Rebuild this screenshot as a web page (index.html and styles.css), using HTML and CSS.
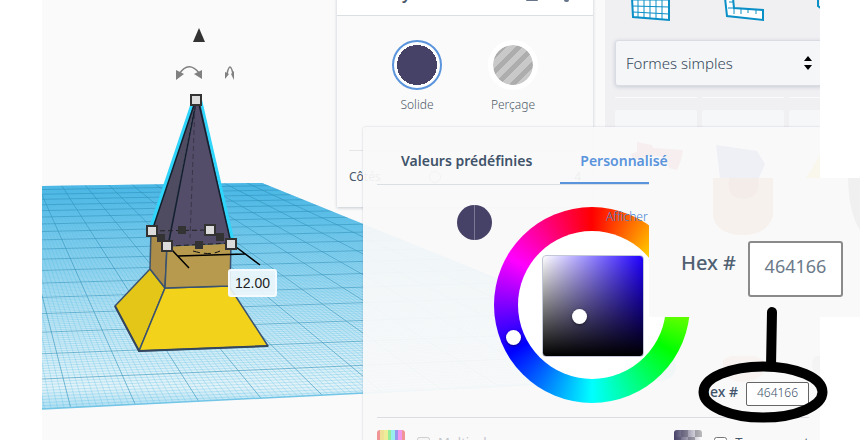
FILE: index.html
```
<!DOCTYPE html>
<html lang="fr">
<head>
    <meta charset="UTF-8">
    <meta name="viewport" content="width=device-width, initial-scale=1.0">
    <title>Éditeur 3D</title>
    <link rel="stylesheet" href="styles.css">
</head>
<body>
    <div class="app">
        <main class="viewport">
            <svg class="scene" viewBox="0 0 563 440" preserveAspectRatio="xMinYMin slice">
                <defs>
                    <linearGradient id="water" x1="0" y1="0" x2="0" y2="1">
                        <stop offset="0" stop-color="#4fb6e6"/>
                        <stop offset="0.25" stop-color="#8bd0ed"/>
                        <stop offset="0.55" stop-color="#bde4f3"/>
                        <stop offset="0.9" stop-color="#e4f3f8"/>
                        <stop offset="1" stop-color="#a8dcf1"/>
                    </linearGradient>
                    <clipPath id="plane-clip">
                        <path d="M0 186 L220 183 L563 322 L563 381 L0 409Z"/>
                    </clipPath>
                </defs>

                <g clip-path="url(#plane-clip)">
                    <rect x="0" y="182" width="563" height="228" fill="url(#water)"/>
                    <path id="minor" class="minor"/>
                    <path id="major" class="major"/>
                </g>
                <path d="M0 409 L563 381" stroke="#72c5e6" stroke-width="1.5"/>

                <!-- base -->
                <g stroke="#3a5270" stroke-width="1.5" stroke-linejoin="round">
                    <path d="M108 269 L123 288 L97 351 L73 306Z" fill="#e4c618"/>
                    <path d="M123 288 L187 286 L226 346 L97 351Z" fill="#f2d21b"/>
                    <path d="M109 231 L108 269 L123 288 L125 246Z" fill="#ab8c48"/>
                    <path d="M125 246 L123 288 L188 286 L189 243Z" fill="#b89a4e"/>
                </g>
                <path d="M73 306 L97 351 L226 346" fill="none" stroke="#33465e" stroke-width="2"/>

                <!-- roof -->
                <path d="M152 100 L108 231" stroke="#2fd5fb" stroke-width="4"/>
                <path d="M158 100 L191 243" stroke="#2fd5fb" stroke-width="4"/>
                <path d="M154 98 L110 231 L126 246Z" fill="#4f4b61"/>
                <path d="M154 98 L126 246 L189 243 L157 98Z" fill="#534d69"/>
                <path d="M153 102 L110 231 M154 102 L126 246 M157 104 L189 243" stroke="#13202f" stroke-width="1.5"/>
                <path d="M153 106 L148 238" stroke="#3a3448" stroke-dasharray="5 3"/>
                <path d="M110 231 L168 230 M126 246 L189 243" stroke="#222" stroke-dasharray="5 3"/>

                <!-- dimension lines -->
                <path d="M130 250 L147 268 M194 247 L218 265 M136 256 L203 254" stroke="#000" stroke-width="1.5"/>
                <path d="M151 251 Q168 256 178 251" fill="none" stroke="#111" stroke-dasharray="7 4"/>

                <g fill="#333">
                    <rect x="136" y="226" width="8" height="8"/>
                    <rect x="115" y="234" width="8" height="8"/>
                    <rect x="174" y="233" width="8" height="8"/>
                    <rect x="153" y="241" width="8" height="8"/>
                </g>
                <g fill="#dcdcdc" stroke="#333" stroke-width="2">
                    <rect x="149" y="95" width="10" height="10"/>
                    <rect x="105" y="226" width="10" height="10"/>
                    <rect x="163" y="225" width="10" height="10"/>
                    <rect x="120" y="241" width="10" height="10"/>
                    <rect x="184" y="239" width="10" height="10"/>
                </g>

                <path d="M157 28 L163 42 H151Z" fill="#333"/>
                <g fill="none" stroke="#808080" stroke-width="1.5">
                    <path d="M137 74 Q147 60 157 73"/>
                    <path d="M185 74 Q188 60 191 74"/>
                </g>
                <path d="M134 70 L142 74 L134 80Z M160 70 L152 74 L160 79Z" fill="#808080"/>
                <path d="M183 72 L187 74 L183 79Z M192 71 L189 74 L192 80Z" fill="#808080"/>
            </svg>
            <input class="dimension" type="text" value="12.00" aria-label="Dimension">

            <section class="inspector">
                <header class="inspector-head">
                    <h2>Pyramide</h2>
                    <svg class="head-icons" viewBox="0 0 44 16" fill="#66758a">
                        <rect x="1" y="3" width="12" height="10" rx="1"/>
                        <rect x="39" y="10" width="5" height="4" rx="2"/>
                    </svg>
                </header>
                <div class="kinds">
                    <button type="button" class="kind selected"><span class="dot"></span>Solide</button>
                    <button type="button" class="kind"><span class="dot hole"></span>Perçage</button>
                </div>
                <div class="param">
                    <label for="sides">Côtés</label>
                    <input type="range" id="sides" min="3" max="10" value="4">
                    <output for="sides">4</output>
                </div>
            </section>
        </main>

        <aside class="sidebar">
            <div class="library">
                <div class="tools">
                    <svg class="tool" viewBox="0 0 40 22" fill="none" stroke="#0a8fc7" stroke-width="2">
                        <path d="M1 -2 L2 17 L38 20 L38 -2" fill="#fff"/>
                        <path d="M2 6 L38 7 M2 12 L38 14 M7 -2 V17 M13 -2 V18 M19 -2 V18 M25 -2 V19 M31 -2 V19 M1 0 H38" stroke-width="1"/>
                    </svg>
                    <svg class="tool" viewBox="0 0 40 22" fill="none" stroke="#0a8fc7" stroke-width="2">
                        <path d="M1 -2 L3 16 L39 20 L39 10 L10 8 L9 -2" fill="#fff"/>
                        <path d="M10 8 V14 M17 9 V14 M24 9 V13 M32 10 V14 M5 2 H9 M4 8 H10" stroke-width="1"/>
                    </svg>
                    <svg class="tool" viewBox="0 0 40 22" fill="none" stroke="#0a8fc7" stroke-width="2">
                        <path d="M1 -2 V6 L5 9 H30"/>
                    </svg>
                </div>
                <div class="picker">
                    <select aria-label="Bibliothèque de formes">
                        <option>Formes simples</option>
                    </select>
                    <svg class="arrows" viewBox="0 0 8 14"><path d="M4 0 L8 5 H0Z M0 9 H8 L4 14Z"/></svg>
                </div>
                <div class="shapes">
                    <div class="edge"></div>
                    <div class="edge"></div>
                    <div class="edge"></div>
                    <div class="card"><svg viewBox="0 0 82 77"><path d="M22 32 L37 35 L38 38 L68 40 L66 50 L62 60 L54 58 L50 47 L34 46 L18 50 L16 44 L22 42Z" fill="#d9435b"/></svg></div>
                    <div class="card"><svg viewBox="0 0 82 77"><path d="M14 35 L55 41 L63 54 L56 70 L18 68Z" fill="#5065b5"/></svg></div>
                    <div class="card"><svg viewBox="0 0 82 77"><path d="M40 30 L62 70 H16Z" fill="#f2d21b"/></svg></div>
                    <div class="card"></div>
                    <div class="card"></div>
                    <div class="card"></div>
                    <div class="card"></div>
                    <div class="card"></div>
                    <div class="card"></div>
                    <div class="card"><svg viewBox="0 0 82 77"><ellipse cx="44" cy="11" rx="17" ry="14" fill="#7cc4dd"/></svg></div>
                    <div class="card"><svg viewBox="0 0 82 77"><path d="M21 4 Q41 -8 61 4 V18 Q41 34 21 18Z" fill="#e09a60"/></svg></div>
                    <div class="card"><svg viewBox="0 0 82 77"><ellipse cx="40" cy="9" rx="17" ry="16" fill="#aaa"/></svg></div>
                </div>
            </div>
        </aside>

        <section class="popover">
            <nav class="tabs">
                <button type="button" class="tab">Valeurs prédéfinies</button>
                <button type="button" class="tab active">Personnalisé</button>
            </nav>
            <div class="mixer">
                <div class="swatch"></div>
                <div class="wheel">
                    <div class="hub">
                        <div class="shade"><span class="knob shade-knob"></span></div>
                    </div>
                    <span class="knob hue-knob"></span>
                    <a class="more" href="#">Afficher</a>
                </div>
                <div class="hex">
                    <label for="hex">Hex #</label>
                    <input type="text" id="hex" value="464166">
                </div>
            </div>
            <div class="options">
                <span class="chip rainbow"></span>
                <input type="checkbox" id="multi" disabled>
                <label class="muted" for="multi">Multicolore</label>
                <span class="chip clear"></span>
                <input type="checkbox" id="transparent">
                <label for="transparent">Transparent</label>
            </div>
        </section>
    </div>

    <div class="callout">
        <svg class="ghost" viewBox="0 0 211 139">
            <path d="M64 0 H124 V38 Q118 57 94 57 Q68 57 64 38Z" fill="#f7f1ed"/>
            <path d="M80 0 H109 Q112 20 94 21 Q77 20 80 0Z" fill="#f4ece8"/>
            <path d="M199 0 H211 V52 Q200 36 199 0Z" fill="#f0f0f0"/>
        </svg>
        <label for="hex-large">Hex #</label>
        <input type="text" id="hex-large" value="464166">
    </div>

    <svg class="marker" viewBox="0 0 132 118" fill="none" stroke="#000">
        <ellipse cx="66" cy="86" rx="59.500" ry="25.500" stroke-width="10"/>
        <path d="M75 6 L74 60" stroke-width="10" stroke-linecap="round"/>
    </svg>

    <script src="scene.js"></script>
</body>
</html>
```
FILE: styles.css
```
body {
    font-family: "Noto Sans", "Open Sans", sans-serif;
    font-size: 13px;
    color: #4a586b;
    background-color: #fff;
    margin: 0;
    position: relative;
    height: 100vh;
    overflow: hidden;
}

* {
    box-sizing: border-box;
}

button,
input,
select {
    font-family: inherit;
    color: inherit;
    margin: 0;
}

.app {
    position: relative;
    display: flex;
    height: 100%;
    margin: 0 42px;
    background-color: #fafafa;
    overflow: hidden;
}

/* 3D view */

.viewport {
    position: relative;
    flex: 1;
    overflow: hidden;
}

.scene {
    display: block;
    width: 100%;
    height: 100%;
}

.minor {
    fill: none;
    stroke: #4dbce6;
    stroke-width: 0.7;
    opacity: 0.4;
}

.major {
    fill: none;
    stroke: #2d93bd;
    stroke-width: 1;
    opacity: 0.6;
}

.dimension {
    position: absolute;
    left: 186px;
    top: 269px;
    width: 49px;
    height: 28px;
    padding: 0;
    border: 2px solid #f4fafd;
    border-radius: 3px;
    background-color: rgba(240, 248, 252, 0.9);
    font-family: "Liberation Sans", Arial, sans-serif;
    font-size: 14px;
    color: #222;
    text-align: center;
}

/* shape inspector */

.inspector {
    position: absolute;
    top: -25px;
    right: 12px;
    width: 256px;
    padding-bottom: 20px;
    background-color: #fafafa;
    box-shadow: 0 1px 3px rgba(40, 60, 90, 0.25);
}

.inspector-head {
    position: relative;
    height: 41px;
    background-color: #fff;
    border-bottom: 1px solid #dcdfe2;
    text-align: center;
}

.inspector-head h2 {
    margin: 0;
    padding-right: 72px;
    font-size: 16px;
    font-weight: 600;
    line-height: 36px;
}

.head-icons {
    position: absolute;
    right: 24px;
    top: 13px;
    width: 44px;
    height: 16px;
}

.kinds {
    display: flex;
    justify-content: center;
    gap: 36px;
    padding: 24px 0 36px;
}

.kind {
    display: flex;
    flex-direction: column;
    align-items: center;
    gap: 6px;
    width: 60px;
    padding: 0;
    border: none;
    background: none;
    font-size: 12px;
    font-weight: 300;
    line-height: 18px;
    color: #4f5a68;
}

.dot {
    width: 50px;
    height: 50px;
    border: 5px solid #fff;
    border-radius: 50%;
    background: #464166 padding-box;
}

.selected .dot {
    border: 2px solid #5a94dc;
    background: radial-gradient(circle, #464166 20px, #fff 20px);
}

.hole {
    background: repeating-linear-gradient(135deg, #c9c9c9 0 6px, #adadad 6px 11px) padding-box;
}

.param {
    display: flex;
    align-items: center;
    gap: 12px;
    margin: 0 12px;
    padding-top: 16px;
    border-top: 1px solid #e4e6e8;
    font-size: 12px;
    line-height: 20px;
}

.param label {
    width: 48px;
}

.param input {
    flex: 1;
    min-width: 0;
    height: 14px;
    appearance: none;
    background: none;
}

.param input::-webkit-slider-thumb {
    appearance: none;
    width: 12px;
    height: 12px;
    border: 1px solid #7d8794;
    border-radius: 50%;
    background-color: #fff;
}

/* shape library */

.sidebar {
    width: 215px;
    overflow: hidden;
    background-color: #f0f0f3;
}

.library {
    width: 266px;
    padding: 0 10px;
}

.tools {
    display: flex;
    gap: 53px;
    padding: 0 16px;
    height: 40px;
}

.tool {
    flex: none;
    width: 40px;
    height: 22px;
}

.picker {
    position: relative;
    margin-bottom: 11px;
}

.picker select {
    display: block;
    width: 100%;
    height: 46px;
    padding: 0 10px;
    appearance: none;
    border: 1px solid #d9dde3;
    border-radius: 3px;
    background-color: #f4f6f8;
    box-shadow: 0 1px 4px rgba(40, 60, 90, 0.2);
    font-size: 15px;
    font-weight: 300;
    color: #35465a;
}

.arrows {
    position: absolute;
    left: 189px;
    top: 16px;
    width: 8px;
    height: 14px;
}

.shapes {
    display: grid;
    grid-template-columns: repeat(3, 82px);
    column-gap: 5px;
    row-gap: 5px;
}

.edge {
    height: 1px;
    margin-bottom: 7px;
    background-color: #fafafc;
}

.card {
    height: 77px;
    border-radius: 3px;
    background-color: #f6f7f9;
}

.card svg {
    display: block;
}

/* colour popover */

.popover {
    position: absolute;
    right: 0;
    top: 127px;
    bottom: -20px;
    width: 457px;
    padding: 12px 11px 0 14px;
    border-radius: 3px 0 0 0;
    background-color: rgba(249, 249, 249, 0.94);
    box-shadow: 0 0 2px rgba(40, 60, 90, 0.25);
}

.tabs {
    display: flex;
    gap: 8px;
    padding-left: 4px;
    border-bottom: 1px solid #dcdfe2;
}

.tab {
    height: 45px;
    padding: 0 20px;
    border: none;
    border-bottom: 2px solid transparent;
    background: none;
    font-size: 14px;
    font-weight: 600;
    color: #40536a;
}

.tab.active {
    border-color: #5a94dc;
    color: #5a94dc;
}

.mixer {
    display: flex;
    height: 233px;
    padding-top: 22px;
    border-bottom: 1px solid #dcdde0;
}

.swatch {
    width: 35px;
    height: 35px;
    margin: -2px 2px 0 80px;
    border-radius: 50%;
    background: linear-gradient(90deg, #464166 17px, #7c7894 17px 18px, #464166 18px);
}

.wheel {
    position: relative;
    display: grid;
    place-items: center;
    width: 196px;
    height: 196px;
    border-radius: 50%;
    background: conic-gradient(#f00, #ff0, #0f0, #0ff, #00f, #f0f, #f00);
}

.hub {
    display: grid;
    place-items: center;
    width: 148px;
    height: 148px;
    padding: 2px 0 0 2px;
    border-radius: 50%;
    background-color: #fff;
}

.shade {
    position: relative;
    width: 102px;
    height: 102px;
    border: 1px solid #c3c8d6;
    border-radius: 4px;
    background: linear-gradient(transparent, #000), linear-gradient(90deg, #fff, #2000ff);
}

.knob {
    position: absolute;
    width: 15px;
    height: 15px;
    border-radius: 50%;
    background-color: #fff;
    box-shadow: 0 1px 3px rgba(0, 0, 0, 0.5);
}

.shade-knob {
    left: 29px;
    top: 53px;
}

.hue-knob {
    left: 12px;
    top: 123px;
}

.more {
    position: absolute;
    left: 112px;
    top: 0;
    font-size: 12px;
    font-weight: 300;
    line-height: 20px;
    color: #3f82d4;
    text-decoration: none;
}

.hex {
    display: flex;
    align-items: center;
    align-self: flex-end;
    gap: 8px;
    margin: 0 0 11px auto;
    font-size: 14px;
    font-weight: 500;
    line-height: 18px;
    color: #40536a;
    white-space: nowrap;
}

.hex label {
    padding-bottom: 4px;
}

.hex input {
    width: 63px;
    height: 24px;
    padding: 0 0 4px;
    border: 1px solid #666;
    border-radius: 2px;
    background-color: #fff;
    font-size: 12px;
    font-weight: 300;
    text-align: center;
}

.options {
    display: flex;
    align-items: flex-start;
    gap: 8px;
    padding-top: 12px;
    line-height: 18px;
}

.chip {
    width: 28px;
    height: 28px;
    margin-right: 4px;
    border-radius: 3px;
}

.rainbow {
    background: linear-gradient(90deg, #f09595 3px, #efdf97 3px 7px, #eeee98 7px 11px, #98ee98 11px 14px, #98eeee 14px 18px, #9898ee 18px 21px, #ee98ee 21px 25px, #f09595 25px);
}

.clear {
    margin-left: auto;
    background: linear-gradient(90deg, #464166, rgba(70, 65, 102, 0)), repeating-conic-gradient(#bbb 0 25%, #fff 0 50%) 0 0 / 14px 14px;
}

.options input {
    margin-top: 7px;
}

.options label {
    padding-top: 3px;
}

.options .muted {
    color: #c3c6cb;
}

/* enlarged hex field */

.callout {
    position: absolute;
    right: 2px;
    top: 178px;
    display: flex;
    align-items: center;
    justify-content: flex-end;
    gap: 12px;
    width: 211px;
    height: 139px;
    padding: 42px 17px 0 0;
    align-items: flex-start;
    background-color: #f9f9f9;
    font-size: 20px;
    font-weight: 500;
    line-height: 86px;
    color: #4f6072;
}

.callout label,
.callout input {
    position: relative;
}

.callout input {
    width: 95px;
    height: 56px;
    margin-top: 21px;
    padding: 0 0 6px;
    border: 2px solid #8a8a8a;
    border-radius: 3px;
    background-color: #fff;
    font-size: 18px;
    color: #6c7a8a;
    text-align: center;
}

.ghost {
    position: absolute;
    left: 0;
    top: 0;
    width: 211px;
    height: 139px;
}

.marker {
    position: absolute;
    right: 33px;
    top: 306px;
    width: 132px;
    height: 118px;
    pointer-events: none;
}
```
FILE: scene.js
```
// workplane grid, drawn in perspective towards two vanishing points
const LEFT_VP = { x: -60, y: 60 };
const RIGHT_VP = { x: 7450, y: 60 };
const STEPS = 10;

function gridPaths() {
    let major = '';
    let minor = '';

    for (let i = -2 * STEPS; i < 16 * STEPS; i++) {
        const slope = 0.255 + (0.19 * i) / STEPS;
        const line = `M${LEFT_VP.x} ${LEFT_VP.y} L${LEFT_VP.x + slope * 360} 420 `;
        if (i % STEPS === 0) major += line;
        else minor += line;
    }

    for (let i = 0; i < 19 * STEPS; i++) {
        const h = 1 / (0.002976 + (0.00028 * i) / STEPS);
        const dy = h / (RIGHT_VP.x - 278);
        const line = `M0 ${60 + h + dy * 278} L563 ${60 + h - dy * 285} `;
        if (i % STEPS === 0) major += line;
        else minor += line;
    }

    document.getElementById('major').setAttribute('d', major);
    document.getElementById('minor').setAttribute('d', minor);
}

gridPaths();
```
